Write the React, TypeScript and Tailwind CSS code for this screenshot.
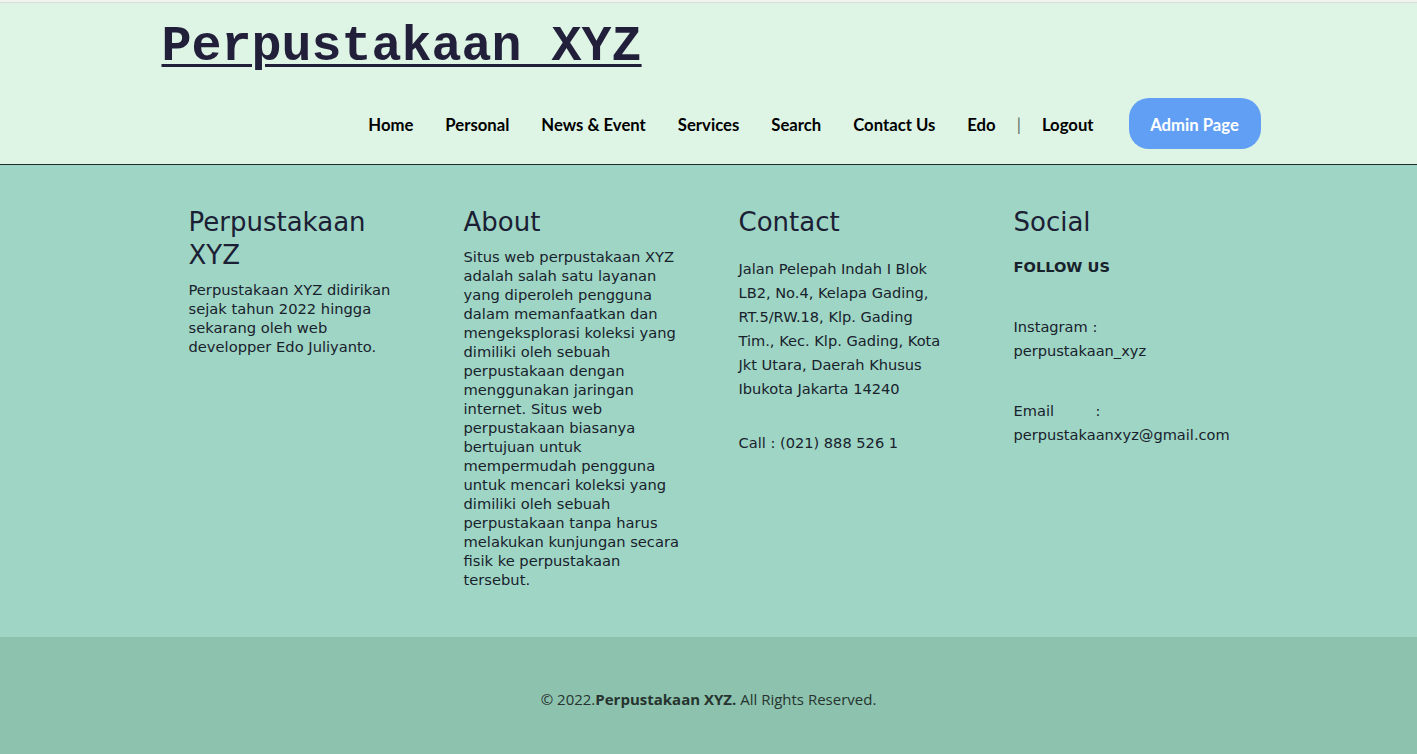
import React from 'react';

const navItems = ['Home', 'Personal', 'News & Event', 'Services', 'Search', 'Contact Us', 'Edo'];

const comic = "font-['Comic_Sans_MS','DejaVu_Sans',sans-serif]";

function Header() {
  return (
    <header className="border-b border-[#1c2b2b] bg-[#def4e5]">
      <div className="mx-auto w-[1104px]">
        <div className="pl-[5px] pt-[14px]">
          <h1 className="font-['Liberation_Mono',monospace] text-[50px] font-bold leading-[60px] text-[#221f3b] underline decoration-[3px] underline-offset-[4px]">
            Perpustakaan XYZ
          </h1>
        </div>
        <nav className="mt-[21px] flex h-[51px] items-center justify-end font-['Lato',sans-serif] text-[16.7px] font-bold text-black">
          {navItems.map((item) => (
            <a key={item} href="#" className="px-4 pt-[4px]">
              {item}
            </a>
          ))}
          <span className="px-[5px] pt-[4px] font-normal text-[#5d6a62]">|</span>
          <a href="#" className="px-4 pt-[4px]">
            Logout
          </a>
          <a
            href="#"
            className="ml-[19px] flex h-[51px] w-[132px] items-center justify-center rounded-[20px] bg-[#619ff4] pt-[4px] text-white"
          >
            Admin Page
          </a>
        </nav>
        <div className="h-[15px]" />
      </div>
    </header>
  );
}

function Footer() {
  return (
    <footer className={`bg-[#9fd5c5] text-[#18222c] ${comic}`}>
      <div className="mx-auto grid w-[1100px] grid-cols-[275px_275px_275px_275px] pb-[48px] pl-[30px] pt-[41px]">
        <div className="w-[240px]">
          <h2 className="text-[26px] leading-[33px] text-[#1b2034]">
            Perpustakaan
            <br />
            XYZ
          </h2>
          <p className="mt-[8px] text-[14.7px] leading-[19px]">
            Perpustakaan XYZ didirikan
            <br />
            sejak tahun 2022 hingga
            <br />
            sekarang oleh web
            <br />
            developper Edo Juliyanto.
          </p>
        </div>
        <div className="w-[240px]">
          <h2 className="text-[26px] leading-[33px] text-[#1b2034]">About</h2>
          <p className="mt-[8px] text-[14.7px] leading-[19px]">
            Situs web perpustakaan XYZ
            <br />
            adalah salah satu layanan
            <br />
            yang diperoleh pengguna
            <br />
            dalam memanfaatkan dan
            <br />
            mengeksplorasi koleksi yang
            <br />
            dimiliki oleh sebuah
            <br />
            perpustakaan dengan
            <br />
            menggunakan jaringan
            <br />
            internet. Situs web
            <br />
            perpustakaan biasanya
            <br />
            bertujuan untuk
            <br />
            mempermudah pengguna
            <br />
            untuk mencari koleksi yang
            <br />
            dimiliki oleh sebuah
            <br />
            perpustakaan tanpa harus
            <br />
            melakukan kunjungan secara
            <br />
            fisik ke perpustakaan
            <br />
            tersebut.
          </p>
        </div>
        <div className="w-[240px]">
          <h2 className="text-[26px] leading-[33px] text-[#1b2034]">Contact</h2>
          <p className="mt-[18px] text-[14.6px] leading-[24px]">
            Jalan Pelepah Indah I Blok
            <br />
            LB2, No.4, Kelapa Gading,
            <br />
            RT.5/RW.18, Klp. Gading
            <br />
            Tim., Kec. Klp. Gading, Kota
            <br />
            Jkt Utara, Daerah Khusus
            <br />
            Ibukota Jakarta 14240
          </p>
          <p className="mt-[30px] text-[14.6px] leading-[24px]">Call : (021) 888 526 1</p>
        </div>
        <div className="w-[250px]">
          <h2 className="text-[26px] leading-[33px] text-[#1b2034]">Social</h2>
          <p className="mt-[16px] text-[14.6px] font-bold leading-[24px]">FOLLOW US</p>
          <p className="mt-[36px] text-[14.6px] leading-[24px]">
            Instagram :
            <br />
            perpustakaan_xyz
          </p>
          <p className="mt-[36px] text-[14.6px] leading-[24px]">
            <span className="inline-block w-[82px]">Email</span>:
            <br />
            perpustakaanxyz@gmail.com
          </p>
        </div>
      </div>
      <div className="flex h-[118px] justify-center bg-[#8dc3ae] pt-[50px] font-['Open_Sans',sans-serif] text-[15px] leading-[24px] text-[#26332f]">
        <p>
          © 2022.<span className="font-bold">Perpustakaan XYZ.</span> All Rights Reserved.
        </p>
      </div>
    </footer>
  );
}

export default function App() {
  return (
    <div className="min-h-screen bg-[#8dc3ae]">
      <div className="h-[3px] border-b border-[#d9dedb] bg-[#f1f3f1]" />
      <Header />
      <Footer />
    </div>
  );
}
